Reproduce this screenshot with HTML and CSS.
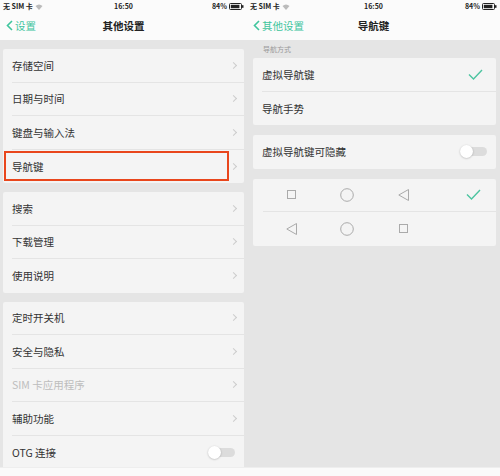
FILE: index.html
```html
<!DOCTYPE html>
<html lang="zh-CN">
<head>
    <meta charset="UTF-8" />
    <title>导航键</title>
    <link rel="stylesheet" href="styles.css">
</head>
<body>
    <div class="phone phone-left">
        <div class="status-bar">
            <span class="carrier">无 SIM 卡
                <svg class="wifi" width="8" height="6" viewBox="0 0 8 6"><path d="M0.5 2 Q4 -1 7.5 2 L4 6 Z" fill="#bbb"/></svg>
            </span>
            <span class="clock">16:50</span>
            <span class="battery">84%
                <svg width="15" height="7" viewBox="0 0 15 7"><rect x="0.5" y="0.5" width="12" height="6" rx="1" fill="none" stroke="#222"/><rect x="1.8" y="1.8" width="8.6" height="3.4" fill="#222"/><rect x="13" y="2.2" width="1.5" height="2.6" fill="#222"/></svg>
            </span>
        </div>
        <div class="nav-bar">
            <span class="back">
                <svg width="7" height="11" viewBox="0 0 7 11"><path d="M6 1 L1.5 5.5 L6 10" fill="none" stroke="#3fc59d" stroke-width="1.6"/></svg>
                设置
            </span>
            <span class="title">其他设置</span>
        </div>
        <div class="content">
            <div class="card">
                <div class="row">存储空间<span class="chev"></span></div>
                <div class="row">日期与时间<span class="chev"></span></div>
                <div class="row">键盘与输入法<span class="chev"></span></div>
                <div class="row row-marked">导航键<span class="chev"></span><span class="mark"></span></div>
            </div>
            <div class="card">
                <div class="row">搜索<span class="chev"></span></div>
                <div class="row">下载管理<span class="chev"></span></div>
                <div class="row">使用说明<span class="chev"></span></div>
            </div>
            <div class="card">
                <div class="row">定时开关机<span class="chev"></span></div>
                <div class="row">安全与隐私<span class="chev"></span></div>
                <div class="row row-disabled">SIM 卡应用程序<span class="chev"></span></div>
                <div class="row">辅助功能<span class="chev"></span></div>
                <div class="row">OTG 连接<span class="toggle"></span></div>
            </div>
        </div>
        <div class="home-strip"></div>
    </div>

    <div class="phone phone-right">
        <div class="status-bar">
            <span class="carrier">无 SIM 卡
                <svg class="wifi" width="8" height="6" viewBox="0 0 8 6"><path d="M0.5 2 Q4 -1 7.5 2 L4 6 Z" fill="#bbb"/></svg>
            </span>
            <span class="clock">16:50</span>
            <span class="battery">84%
                <svg width="15" height="7" viewBox="0 0 15 7"><rect x="0.5" y="0.5" width="12" height="6" rx="1" fill="none" stroke="#222"/><rect x="1.8" y="1.8" width="8.6" height="3.4" fill="#222"/><rect x="13" y="2.2" width="1.5" height="2.6" fill="#222"/></svg>
            </span>
        </div>
        <div class="nav-bar">
            <span class="back">
                <svg width="7" height="11" viewBox="0 0 7 11"><path d="M6 1 L1.5 5.5 L6 10" fill="none" stroke="#3fc59d" stroke-width="1.6"/></svg>
                其他设置
            </span>
            <span class="title">导航键</span>
        </div>
        <div class="content">
            <div class="section-label">导航方式</div>
            <div class="card card-first">
                <div class="row">虚拟导航键<span class="check"><svg width="15" height="11" viewBox="0 0 15 11"><path d="M1 5.5 L5.5 10 L14 1" fill="none" stroke="#4cc4a0" stroke-width="1.4"/></svg></span></div>
                <div class="row">导航手势</div>
            </div>
            <div class="card">
                <div class="row">虚拟导航键可隐藏<span class="toggle"></span></div>
            </div>
            <div class="card">
                <div class="row keys">
                    <span class="key"><svg width="9" height="9" viewBox="0 0 9 9"><rect x="0.5" y="0.5" width="8" height="8" fill="none" stroke="#aaa"/></svg></span>
                    <span class="key"><svg width="14" height="14" viewBox="0 0 14 14"><circle cx="7" cy="7" r="6.3" fill="none" stroke="#aaa"/></svg></span>
                    <span class="key"><svg width="11" height="12" viewBox="0 0 11 12"><path d="M10.5 0.5 L0.8 6 L10.5 11.5 Z" fill="none" stroke="#aaa" stroke-linejoin="round"/></svg></span>
                    <span class="check"><svg width="15" height="11" viewBox="0 0 15 11"><path d="M1 5.5 L5.5 10 L14 1" fill="none" stroke="#4cc4a0" stroke-width="1.4"/></svg></span>
                </div>
                <div class="row keys">
                    <span class="key"><svg width="11" height="12" viewBox="0 0 11 12"><path d="M10.5 0.5 L0.8 6 L10.5 11.5 Z" fill="none" stroke="#aaa" stroke-linejoin="round"/></svg></span>
                    <span class="key"><svg width="14" height="14" viewBox="0 0 14 14"><circle cx="7" cy="7" r="6.3" fill="none" stroke="#aaa"/></svg></span>
                    <span class="key"><svg width="9" height="9" viewBox="0 0 9 9"><rect x="0.5" y="0.5" width="8" height="8" fill="none" stroke="#aaa"/></svg></span>
                </div>
            </div>
        </div>
        <div class="home-strip"></div>
    </div>
</body>
</html>
```

FILE: styles.css
```css
* {
    margin: 0;
    padding: 0;
    box-sizing: border-box;
}

:root {
    --bg-color: #e5e5e5;
    --card-color: #f4f4f4;
    --bar-color: #fbfbfb;
    --text-color: #333;
    --line-color: #e4e4e4;
    --green: #3fc59d;
}

body {
    width: 500px;
    height: 476px;
    display: flex;
    overflow: hidden;
    background: #fff;
    font-family: "Noto Sans CJK SC", "Noto Sans", sans-serif;
    color: var(--text-color);
}

.phone {
    height: 476px;
    display: flex;
    flex-direction: column;
    background: var(--bg-color);
}

.phone-left {
    width: 247px;
}

.phone-right {
    width: 253px;
}

.status-bar {
    height: 13px;
    padding: 0 3px;
    display: flex;
    align-items: center;
    justify-content: space-between;
    background: var(--bar-color);
    font-size: 7px;
    font-weight: 700;
    line-height: 1;
    color: #222;
}

.carrier {
    display: flex;
    align-items: center;
    gap: 2px;
    width: 70px;
}

.battery {
    display: flex;
    align-items: center;
    justify-content: flex-end;
    gap: 2px;
    width: 70px;
}

.nav-bar {
    height: 27px;
    position: relative;
    display: flex;
    align-items: center;
    justify-content: center;
    background: var(--bar-color);
    padding-bottom: 2px;
}

.back {
    position: absolute;
    left: 6px;
    top: 5px;
    display: flex;
    align-items: center;
    gap: 2px;
    color: var(--green);
    font-size: 10.5px;
}

.title {
    font-size: 10.5px;
    font-weight: 700;
    color: #222;
}

.content {
    flex: 1;
    overflow: hidden;
    padding: 9px 3px 0;
}

.phone-right .content {
    padding: 0 4px 0 6px;
}

.section-label {
    height: 18px;
    padding-left: 10px;
    display: flex;
    align-items: center;
    font-size: 7px;
    color: #999;
}

.card {
    background: var(--card-color);
    border-radius: 2px;
    margin-bottom: 9px;
}

.phone-right .card {
    margin-bottom: 10px;
}

.row {
    height: 33.5px;
    margin-left: 9px;
    padding-right: 6px;
    display: flex;
    align-items: center;
    justify-content: space-between;
    position: relative;
    font-size: 10.5px;
    border-bottom: 1px solid var(--line-color);
}

.row:last-child {
    border-bottom: none;
}

.row-disabled {
    color: #bdbdbd;
}

.chev {
    width: 5px;
    height: 5px;
    border-top: 1px solid #ccc;
    border-right: 1px solid #ccc;
    transform: rotate(45deg);
    margin-right: 2px;
}

.mark {
    position: absolute;
    left: -8px;
    right: 15px;
    top: 1px;
    bottom: 2px;
    border: 2px solid #e9461c;
}

.check {
    display: flex;
    align-items: center;
    margin-right: 7px;
}

.toggle {
    width: 27px;
    height: 13px;
    position: relative;
    margin-right: 3px;
}

.toggle::before {
    content: "";
    position: absolute;
    left: 3px;
    right: 0;
    top: 2px;
    height: 9px;
    border-radius: 5px;
    background: #dcdcdc;
}

.toggle::after {
    content: "";
    position: absolute;
    left: 0;
    top: 0;
    width: 13px;
    height: 13px;
    border-radius: 50%;
    background: #fff;
    box-shadow: 0 0.5px 2px rgba(0, 0, 0, 0.25);
}

.keys {
    margin-left: 0;
    padding-left: 10px;
    justify-content: flex-start;
}

.keys:first-child {
    margin-left: 10px;
    padding-left: 0;
}

.key {
    width: 56px;
    display: flex;
    justify-content: center;
    align-items: center;
}

.keys .check {
    margin-left: auto;
    margin-right: 9px;
}

.home-strip {
    height: 9px;
    background: #fafafa;
    border-top: 1px solid #eee;
}
```
